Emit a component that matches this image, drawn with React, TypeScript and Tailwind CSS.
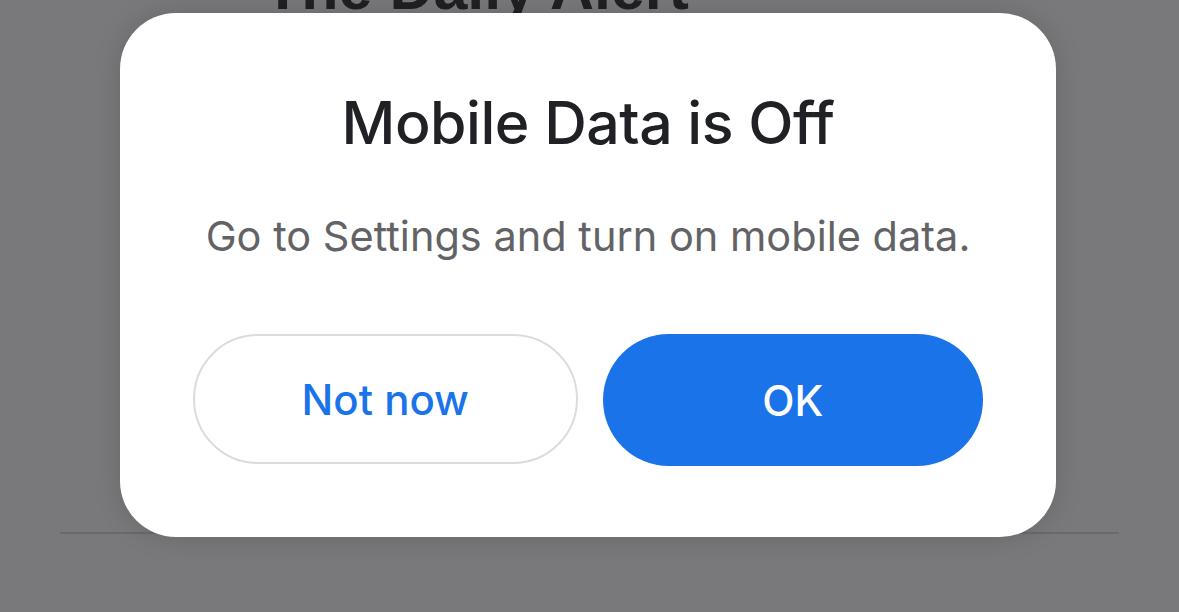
export default function App() {
  return (
    <div className="relative h-[612px] w-full overflow-hidden bg-[#79797b]">
      {/* dimmed page behind the sheet */}
      <div className="flex flex-col px-[60px]">
        <h1 className="mt-[-42px] pl-[204px] text-[61px] font-bold leading-[61px] text-[#202022] [font-family:'Liberation_Sans',Arial,sans-serif]">
          The Daily Alert
        </h1>
        <div className="mt-[513px] h-[2px] bg-[#6a6a6c]" />
      </div>

      <div className="absolute left-[120px] top-[13px] flex h-[524px] w-[936px] flex-col items-center rounded-[56px] bg-white px-[73px] pt-[74px] shadow-[0_0_28px_rgba(0,0,0,0.14)]">
        <h2 className="text-[59px] font-medium leading-[72px] tracking-[-0.5px] text-[#202124] [font-family:Inter,'Noto_Sans',sans-serif]">
          Mobile Data is Off
        </h2>
        <p className="mt-[52px] text-[41.5px] leading-[50px] text-[#636366] [font-family:Inter,'Noto_Sans',sans-serif]">
          Go to Settings and turn on mobile data.
        </p>
        <div className="mt-[73px] flex w-full gap-[25px]">
          <button className="flex h-[130px] flex-1 items-center justify-center rounded-full border-2 border-[#dadce0] bg-white text-[42px] font-medium text-[#1a73e8] [font-family:Inter,'Noto_Sans',sans-serif]">
            Not now
          </button>
          <button className="flex h-[132px] flex-1 items-center justify-center rounded-full bg-[#1a73e8] text-[42px] font-medium text-white [font-family:Inter,'Noto_Sans',sans-serif]">
            OK
          </button>
        </div>
      </div>
    </div>
  );
}
